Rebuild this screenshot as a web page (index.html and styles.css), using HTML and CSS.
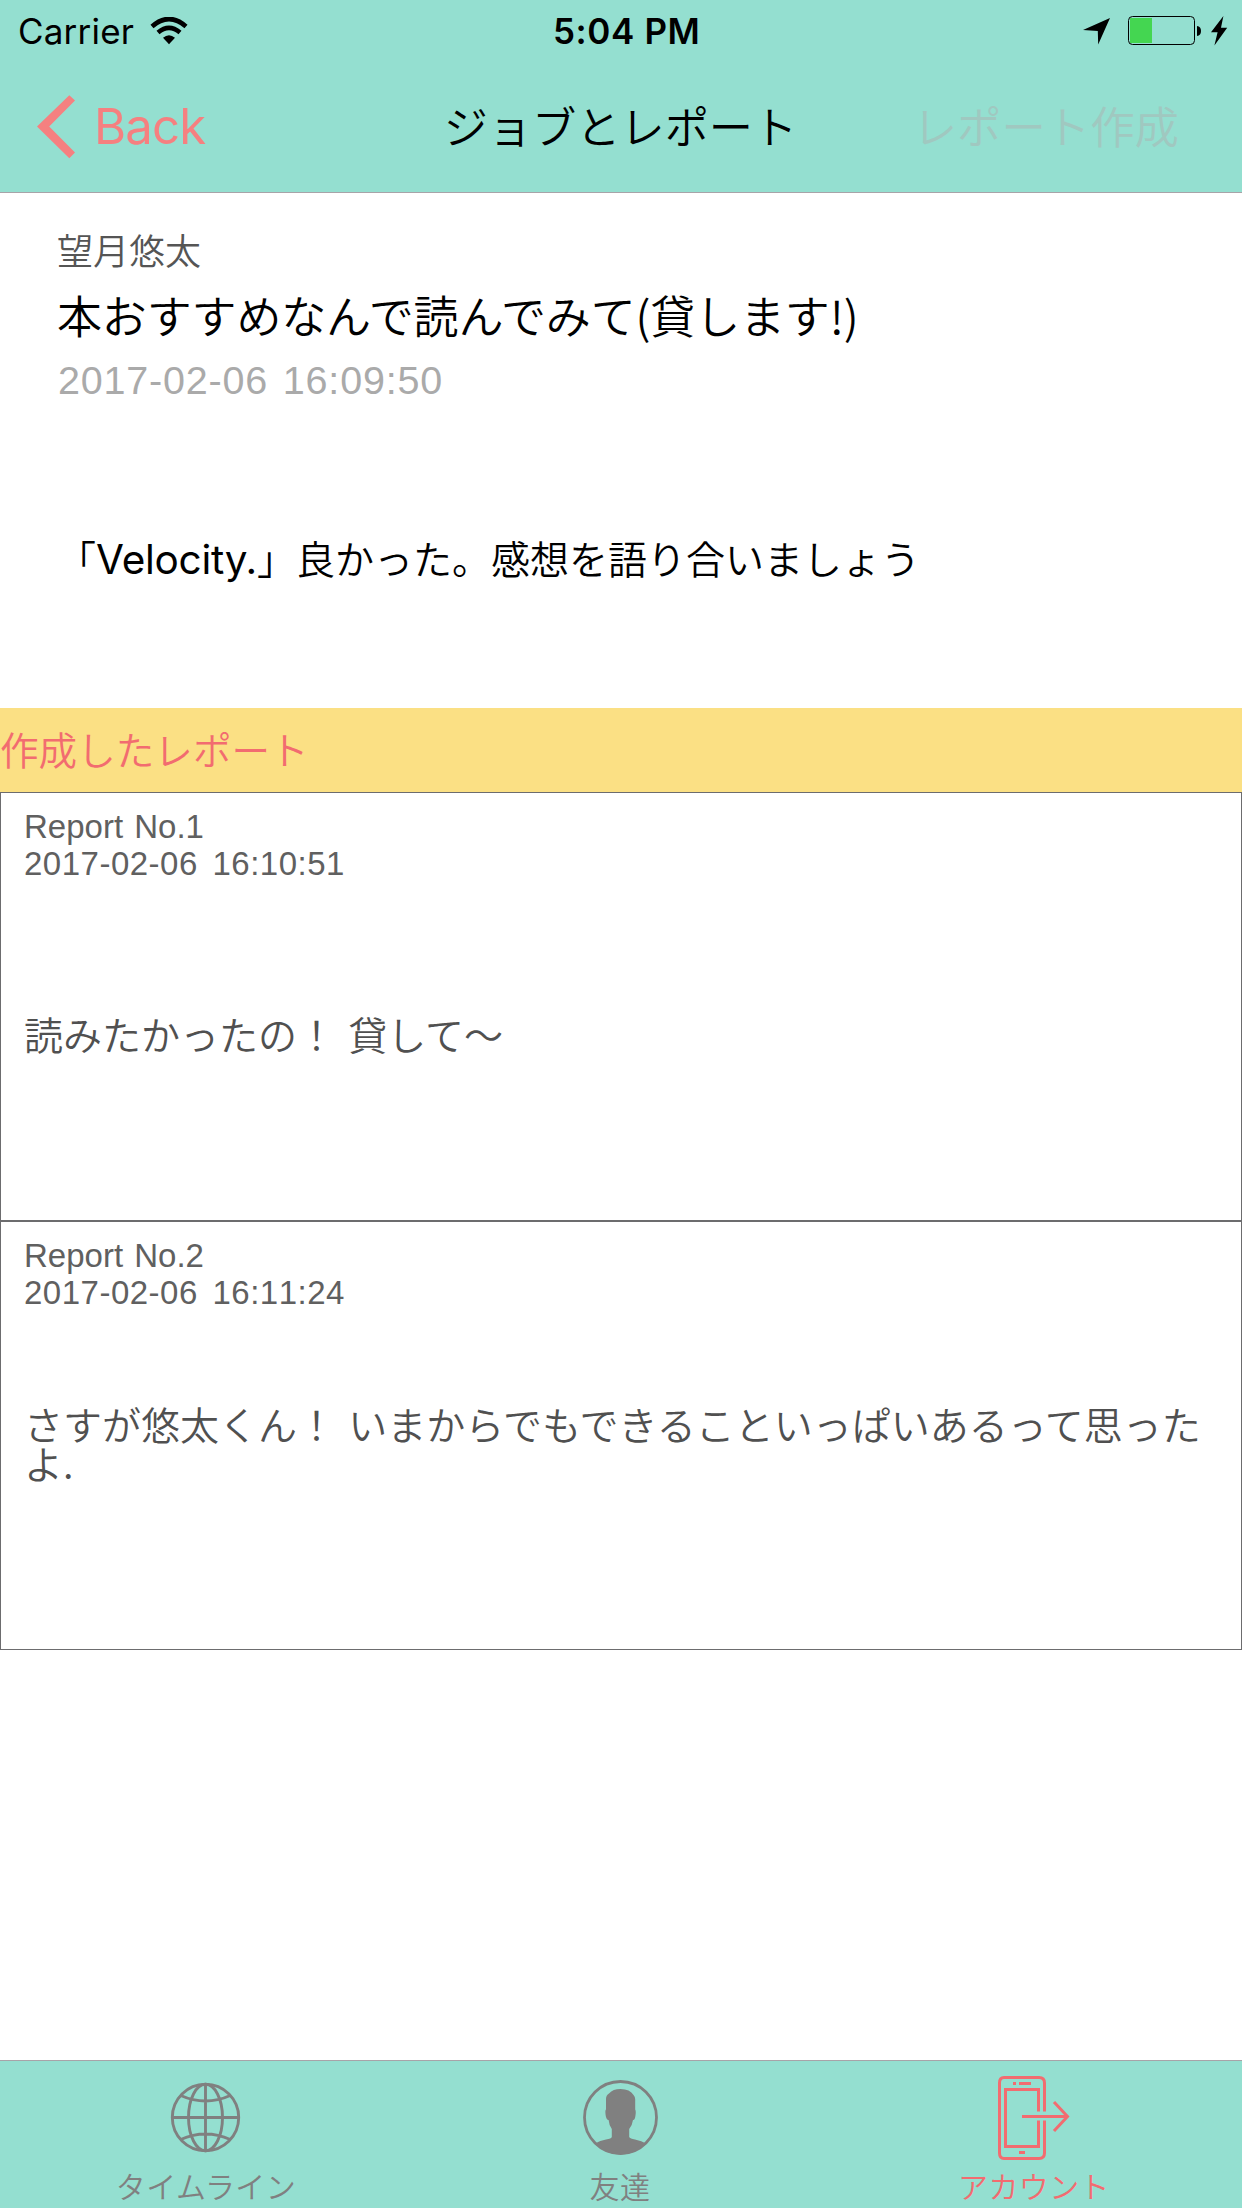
FILE: index.html
```html
<!DOCTYPE html>
<html lang="ja">
<head>
<meta charset="utf-8">
<title>ジョブとレポート</title>
<link rel="stylesheet" href="styles.css">
</head>
<body>
<div class="screen">
  <header class="header">
    <div class="status">
      <div class="status-left">
        <span class="carrier">Carrier</span>
        <svg class="wifi" width="38" height="28" viewBox="0 0 38 28">
          <path d="M2 9.4 Q19 -5.4 36 9.4" fill="none" stroke="#000" stroke-width="4.6"/>
          <path d="M8 15.4 Q19 6.2 30 15.4" fill="none" stroke="#000" stroke-width="4.6"/>
          <path d="M13 20.8 Q19 15.6 25 20.8 L19 27.2 Z"/>
        </svg>
      </div>
      <div class="time">5:04 PM</div>
      <div class="status-right">
        <svg width="27" height="27" viewBox="0 0 27 27"><path d="M0 12 L27 0 L15.2 26.6 L14.8 13 Z"/></svg>
        <svg class="battery" width="74" height="30" viewBox="0 0 74 30">
          <rect x="0.5" y="0.5" width="66" height="28" rx="4" fill="none" stroke="#000"/>
          <rect x="2" y="2" width="22" height="25" fill="#44d651"/>
          <path d="M69 10 Q73 10.4 73 15 Q73 19.6 69 20 Z"/>
        </svg>
        <svg width="17" height="30" viewBox="0 0 17 30"><path d="M12.4 0 L0 16.2 L6.6 16.2 L3.4 29.4 L16.2 11.8 L10 11.8 Z"/></svg>
      </div>
    </div>
    <nav class="nav">
      <div class="back">
        <svg width="38" height="64" viewBox="0 0 38 64"><path d="M32.3 .2 L38 5.6 L12.2 31.6 L38 57.4 L32.3 63.2 L0 31.6 Z" fill="#f58080"/></svg>
        <span class="back-label">Back</span>
      </div>
      <h1 class="title">ジョブとレポート</h1>
      <div class="create">レポート作成</div>
    </nav>
  </header>

  <main class="main">
    <section class="job">
      <div class="author">望月悠太</div>
      <h2 class="job-title">本おすすめなんで読んでみて(貸します!)</h2>
      <div class="job-date">2017-02-06 16:09:50</div>
      <p class="job-body">「<span class="latin">Velocity.</span>」良かった。感想を語り合いましょう</p>
    </section>
    <h3 class="section-head">作成したレポート</h3>
    <article class="report">
      <div class="meta">Report No.1</div>
      <div class="meta meta-date">2017-02-06 16:10:51</div>
      <p class="text">読みたかったの！ 貸して〜</p>
    </article>
    <article class="report report-long">
      <div class="meta">Report No.2</div>
      <div class="meta meta-date">2017-02-06 16:11:24</div>
      <p class="text">さすが悠太くん！ いまからでもできることいっぱいあるって思ったよ.</p>
    </article>
  </main>

  <footer class="tabs">
    <div class="tab">
      <svg class="icon" width="90" height="86" viewBox="0 0 90 86">
        <g fill="none" stroke="#808080" stroke-width="2.9">
          <circle cx="43.5" cy="42.5" r="33.2"/>
          <ellipse cx="43.5" cy="42.5" rx="17" ry="33.2"/>
          <path d="M43.5 9 V76 M10 42.5 H77 M18.7 20.5 Q43.5 31.5 68.3 20.5 M18.7 64.5 Q43.5 53.5 68.3 64.5"/>
        </g>
      </svg>
      <span class="tab-label">タイムライン</span>
    </div>
    <div class="tab">
      <svg class="icon" width="90" height="86" viewBox="0 0 90 86">
        <circle cx="44.5" cy="42.5" r="36" fill="none" stroke="#808080" stroke-width="2.8"/>
        <path d="M19 68.5 Q24 65.5 30 64.5 Q35.5 63.8 35.8 62 V54 Q33 50 32.6 45 Q30.3 45 29.6 40 Q29 35 30 34.5 V24 Q30 20 33 18.4 Q37 14 44.5 14 Q54 14 57.5 20 Q59.6 22 59.2 27 V34.5 Q60.2 36 59.4 41 Q58.8 45.4 57 45 Q56.4 50 53.2 54 V62 Q54 63.8 59 64.5 Q66 66 70 68.5 Q59 79.5 44.5 79.5 Q30 79.5 19 68.5 Z" fill="#808080"/>
      </svg>
      <span class="tab-label">友達</span>
    </div>
    <div class="tab active">
      <svg class="icon" width="90" height="86" viewBox="0 0 90 86">
        <g fill="none" stroke="#f26c70" stroke-width="3">
          <path d="M54.5 36.5 V8 Q54.5 2.5 49 2.5 H14 Q9.5 2.5 9.5 8 V78 Q9.5 83.5 14 83.5 H49 Q54.5 83.5 54.5 78 V45.5"/>
          <path d="M48.5 36.5 V14.5 H15.5 V71.5 H48.5 V45.5"/>
          <path d="M23 8.5 H26 M29 8.5 H41 M29 77.5 H35"/>
          <path d="M32 41.5 H77 M64 27 L77.5 41.5 L64 56"/>
        </g>
      </svg>
      <span class="tab-label">アカウント</span>
    </div>
  </footer>
</div>
</body>
</html>
```

FILE: styles.css
```css
* { box-sizing: border-box; }

body {
  margin: 0;
  background: #fff;
  font-family: "Noto Sans CJK JP", sans-serif;
  font-weight: 350;
  color: #000;
  text-spacing-trim: space-all;
}

h1, h2, h3, p { margin: 0; font-weight: inherit; }
svg { display: block; flex: none; }

.screen {
  width: 1242px;
  height: 2208px;
  display: flex;
  flex-direction: column;
  overflow: hidden;
}

.header {
  height: 193px;
  background: #94dfd0;
  border-bottom: 1px solid #a8a3a8;
}

.status {
  height: 60px;
  display: grid;
  grid-template-columns: 535px auto 1fr;
  padding: 0 14px 0 18px;
  font-family: Inter, sans-serif;
  line-height: 62px;
}

.status-left, .status-right { display: flex; align-items: center; }
.status-right { justify-content: flex-end; gap: 16px; }
.carrier { font-size: 35px; font-weight: 400; letter-spacing: 0.2px; width: 132px; }
.battery { margin: 0 -7px 0 2px; }
.time { font-size: 35px; font-weight: 600; letter-spacing: 0.6px; }

.nav {
  height: 132px;
  display: grid;
  grid-template-columns: 404px 1fr 404px;
  align-items: center;
  padding: 0 37px;
}

.back { display: flex; align-items: center; gap: 19px; padding-top: 1px; }
.back-label { font: 400 49px/60px Inter, sans-serif; letter-spacing: -0.8px; color: #f58080; }
.title { font-size: 44.2px; line-height: 60px; margin: -2px 0 0 -1px; text-align: center; white-space: nowrap; }
.create { font-size: 44.4px; line-height: 60px; margin-top: -2px; text-align: right; padding-right: 26px; color: #a0c8c0; }

.main { flex: 1; }

.job { height: 515px; padding: 31px 57px 0; }
.author { font-size: 36px; line-height: 50px; color: #555; }
.job-title { font-size: 45px; line-height: 60px; margin-top: 11px; letter-spacing: -0.15px; }
.job-date {
  font: 400 39.5px/50px "Liberation Sans", sans-serif;
  font-kerning: none;
  letter-spacing: 0.8px;
  word-spacing: 3px;
  margin: 10px 0 0 1px;
  color: #aaa;
}
.job-body { font-size: 39px; line-height: 50px; margin-top: 127px; }
.latin { font-family: Inter, sans-serif; font-size: 40.5px; font-weight: 400; letter-spacing: -0.25px; }

.section-head {
  height: 84px;
  line-height: 81px;
  font-size: 38.6px;
  background: #fbe084;
  color: #f26c70;
}

.report {
  height: 429px;
  border: 1px solid #6c6c6e;
  padding: 15px 0 0 23px;
  color: #505050;
}

.meta {
  font: 400 33px/37px "Liberation Sans", sans-serif;
  font-kerning: none;
  word-spacing: 2px;
  color: #606060;
}
.meta-date { letter-spacing: 0.5px; word-spacing: 5px; }
.text { font-size: 39px; line-height: 39px; margin: 132px 30px 0 0; word-spacing: 3.5px; }
.report-long .text { margin-top: 93px; }

.tabs {
  height: 148px;
  display: grid;
  grid-template-columns: repeat(3, 1fr);
  background: #94dfd0;
  border-top: 1px solid #a8a3a8;
}

.tab {
  display: flex;
  flex-direction: column;
  align-items: center;
  padding-top: 14px;
  font-size: 30px;
  line-height: 44px;
  color: #808080;
}

.icon { margin-bottom: 2px; }
.tab-label { letter-spacing: 0.4px; margin-right: 2px; }
.active { color: #f26c70; }
```
